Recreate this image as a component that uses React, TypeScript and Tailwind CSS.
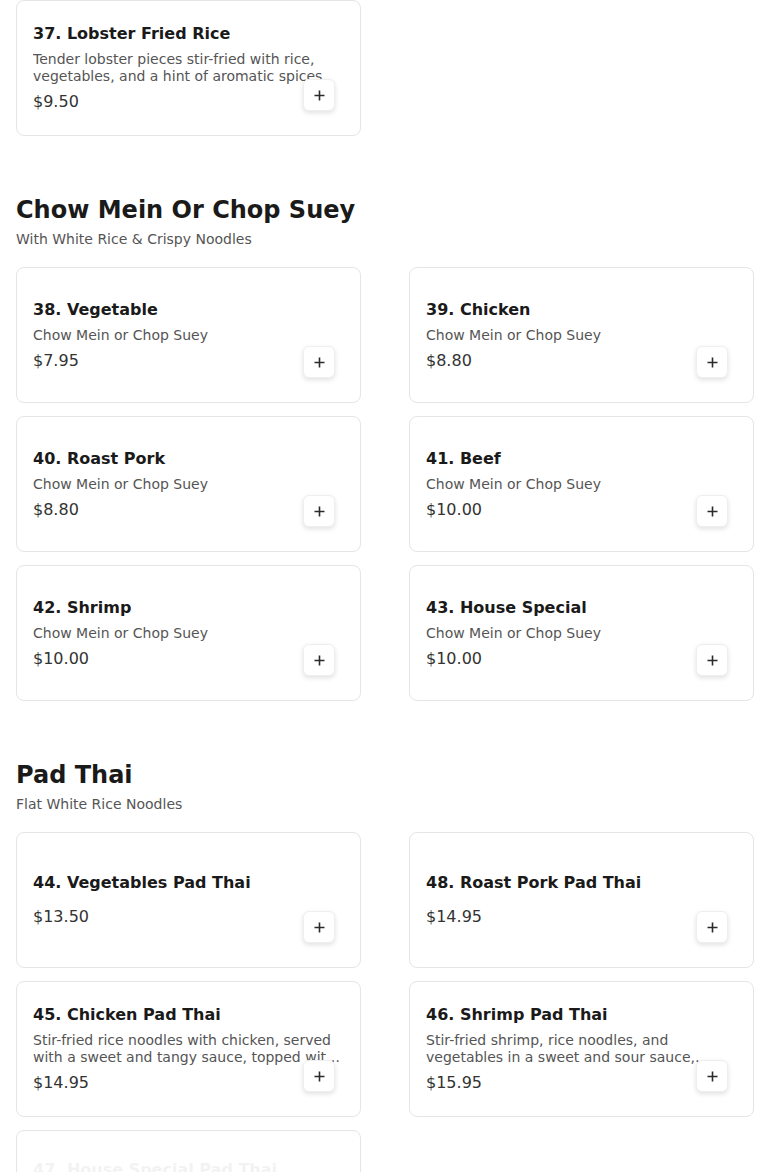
import React from "react";

type Item = { title: string; desc?: string; price: string; faded?: boolean };

const PlusIcon = () => (
  <svg width="11" height="11" viewBox="0 0 11 11" fill="none">
    <path d="M5.5 0.5v10M0.5 5.5h10" stroke="#2b2b2b" strokeWidth="1.6" />
  </svg>
);

function Card({ item }: { item: Item }) {
  return (
    <div className="relative h-[136px] rounded-lg border border-[#e5e5e5] bg-white">
      <div
        className={`flex h-full flex-col justify-center px-4 ${item.faded ? "translate-y-[6px] opacity-[0.05]" : ""}`}
      >
        <div className="text-base font-bold leading-6 text-[#1a1a1a]">{item.title}</div>
        {item.desc ? (
          <div className="mt-[5px] line-clamp-2 text-sm leading-[17px] text-[#555555]">{item.desc}</div>
        ) : null}
        <div className={`${item.desc ? "mt-[5px]" : "mt-[10px]"} text-base leading-6 text-[#333333]`}>
          {item.price}
        </div>
      </div>
      {!item.faded && (
        <button className="absolute bottom-6 right-[25px] flex h-8 w-8 items-center justify-center rounded-md border border-[#efefef] bg-white shadow-[0_2px_5px_rgba(0,0,0,0.12)]">
          <PlusIcon />
        </button>
      )}
    </div>
  );
}

function Grid({ items }: { items: (Item | null)[] }) {
  return (
    <div className="grid grid-cols-2 gap-x-12 gap-y-[13px]">
      {items.map((it, i) => (it ? <Card key={i} item={it} /> : <div key={i} />))}
    </div>
  );
}

function Section({ title, sub, items }: { title: string; sub: string; items: (Item | null)[] }) {
  return (
    <div className="mt-[58px]">
      <h2 className="text-2xl font-bold leading-8 text-[#1a1a1a]">{title}</h2>
      <p className="mt-[3px] text-sm leading-5 text-[#555555]">{sub}</p>
      <div className="mt-[18px]">
        <Grid items={items} />
      </div>
    </div>
  );
}

const cm = "Chow Mein or Chop Suey";

export default function App() {
  return (
    <div
      className="h-[1172px] overflow-hidden bg-white px-4"
      style={{ fontFamily: '"DejaVu Sans", sans-serif' }}
    >
      <Grid
        items={[
          {
            title: "37. Lobster Fried Rice",
            desc: "Tender lobster pieces stir-fried with rice, vegetables, and a hint of aromatic spices.",
            price: "$9.50",
          },
          null,
        ]}
      />
      <Section
        title="Chow Mein Or Chop Suey"
        sub="With White Rice & Crispy Noodles"
        items={[
          { title: "38. Vegetable", desc: cm, price: "$7.95" },
          { title: "39. Chicken", desc: cm, price: "$8.80" },
          { title: "40. Roast Pork", desc: cm, price: "$8.80" },
          { title: "41. Beef", desc: cm, price: "$10.00" },
          { title: "42. Shrimp", desc: cm, price: "$10.00" },
          { title: "43. House Special", desc: cm, price: "$10.00" },
        ]}
      />
      <Section
        title="Pad Thai"
        sub="Flat White Rice Noodles"
        items={[
          { title: "44. Vegetables Pad Thai", price: "$13.50" },
          { title: "48. Roast Pork Pad Thai", price: "$14.95" },
          {
            title: "45. Chicken Pad Thai",
            desc: "Stir-fried rice noodles with chicken, served with a sweet and tangy sauce, topped with crushed peanuts and lime.",
            price: "$14.95",
          },
          {
            title: "46. Shrimp Pad Thai",
            desc: "Stir-fried shrimp, rice noodles, and vegetables in a sweet and sour sauce, topped with peanuts.",
            price: "$15.95",
          },
          {
            title: "47. House Special Pad Thai",
            desc: "Stir-fried rice noodles with chicken, shrimp and beef in a sweet and tangy sauce.",
            price: "$16.95",
            faded: true,
          },
          null,
        ]}
      />
    </div>
  );
}
